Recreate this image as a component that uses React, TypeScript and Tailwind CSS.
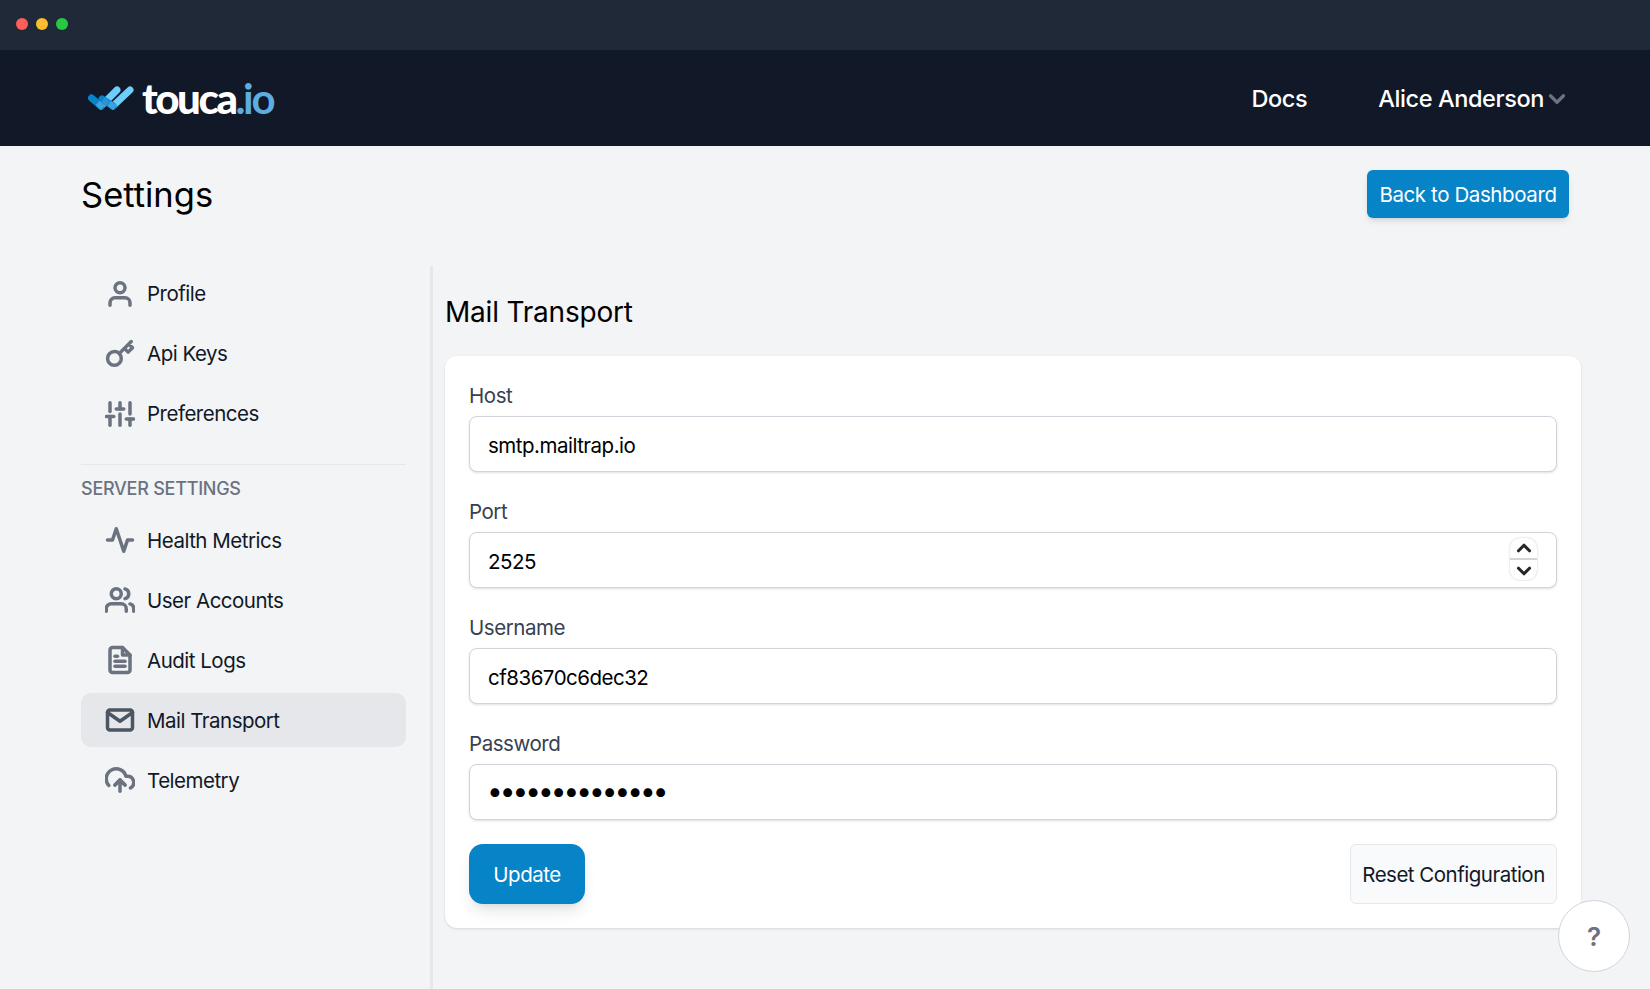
import React from 'react';
import { FiUser, FiKey, FiSliders, FiActivity, FiUsers, FiFileText, FiMail, FiUploadCloud, FiChevronDown, FiChevronUp } from 'react-icons/fi';

type NavItem = { label: string; icon: React.ComponentType<{ size?: number; strokeWidth?: number; className?: string }>; active?: boolean };

const personal: NavItem[] = [
  { label: 'Profile', icon: FiUser },
  { label: 'Api Keys', icon: FiKey },
  { label: 'Preferences', icon: FiSliders },
];

const server: NavItem[] = [
  { label: 'Health Metrics', icon: FiActivity },
  { label: 'User Accounts', icon: FiUsers },
  { label: 'Audit Logs', icon: FiFileText },
  { label: 'Mail Transport', icon: FiMail, active: true },
  { label: 'Telemetry', icon: FiUploadCloud },
];

function NavRow({ item, raised = false }: { item: NavItem; raised?: boolean }) {
  const Icon = item.icon;
  return (
    <a className={`flex h-[54px] items-center gap-[12px] rounded-[10px] px-[24px] text-[20.5px] tracking-[-0.5px] text-[#111827] ${item.active ? 'bg-[#e5e7eb]' : ''}`}>
      <Icon size={30} strokeWidth={2.8} className={item.active ? 'text-[#4b5563]' : 'text-[#6b7280]'} />
      <span className={raised ? 'pt-0' : 'pt-[2px]'}>{item.label}</span>
    </a>
  );
}

function Field({ label, value, type = 'text', spinner = false }: { label: string; value: string; type?: string; spinner?: boolean }) {
  const isPassword = type === 'password';
  return (
    <div className="flex flex-col">
      <label className="mb-[5px] h-[31px] text-[20.5px] leading-[31px] tracking-[-0.45px] text-[#374151]">{label}</label>
      <div className="relative">
        <input
          readOnly
          type={type}
          value={value}
          className={`h-[56px] w-full rounded-[8px] border border-[#d1d5db] bg-white pr-[18px] text-black shadow-sm outline-none ${
            isPassword ? 'pb-[3px] pl-[17px] text-[28px] tracking-[-3px]' : 'pl-[18px] pt-[2px] text-[20.5px] tracking-[-0.5px]'
          }`}
        />
        {spinner && (
          <div className="absolute right-[20px] top-[6px] flex h-[42px] w-[27px] flex-col items-center overflow-hidden rounded-[10px] bg-white text-[#27272a] shadow-[0_0_2px_rgba(0,0,0,0.25)]">
            <div className="flex h-[22px] w-full items-center justify-center border-b-[2px] border-[#d4d4d8]">
              <FiChevronUp size={22} strokeWidth={3.4} />
            </div>
            <div className="flex w-full flex-1 items-center justify-center">
              <FiChevronDown size={22} strokeWidth={3.4} />
            </div>
          </div>
        )}
      </div>
    </div>
  );
}

function LogoMark() {
  return (
    <svg width="48" height="28" viewBox="0 0 48 28" fill="none" strokeLinecap="round">
      <path d="M13 22 L29 6" stroke="#6fcdfc" strokeWidth="7" />
      <path d="M25 22 L42 6" stroke="#6fcdfc" strokeWidth="7" />
      <path d="M3.500 14 L13 22" stroke="#0784c7" strokeWidth="7" />
      <path d="M14 15 L25 22" stroke="#0784c7" strokeWidth="7" />
      <path d="M9.500 19 L15 23.500" stroke="#3ea3dc" strokeWidth="6" strokeLinecap="butt" />
      <path d="M15 16 L20 19.500" stroke="#2f93d3" strokeWidth="6" strokeLinecap="butt" />
      <path d="M21 19.500 L27 23.500" stroke="#3ea3dc" strokeWidth="6" strokeLinecap="butt" />
    </svg>
  );
}

export default function App() {
  return (
    <div className="flex h-[989px] flex-col overflow-hidden bg-[#f3f4f6] font-['Inter',sans-serif] text-black">
      <div className="flex h-[50px] items-center gap-[8px] bg-[#1f2937] pb-[2px] pl-[16px]">
        <span className="h-[12px] w-[12px] rounded-full bg-[#fe5f57]" />
        <span className="h-[12px] w-[12px] rounded-full bg-[#febc2e]" />
        <span className="h-[12px] w-[12px] rounded-full bg-[#28c840]" />
      </div>

      <header className="flex h-[96px] items-center justify-between bg-[#111827] pl-[88px] pr-[80px]">
        <div className="flex items-center gap-[6px]">
          <LogoMark />
          <span className="font-['Lato',sans-serif] text-[42px] font-black leading-none tracking-[-2.4px] text-white">
            touca<span className="font-bold text-[#5dade0]">.io</span>
          </span>
        </div>
        <nav className="flex items-center pt-[2px] text-[23.5px] font-medium tracking-[-0.4px] text-white">
          <a className="mr-[71px]">Docs</a>
          <a className="flex items-center">
            Alice Anderson
            <FiChevronDown size={26} strokeWidth={3} className="text-[#6b7280]" />
          </a>
        </nav>
      </header>

      <main className="flex min-h-0 flex-1 flex-col pl-[81px] pr-[69px] pt-[24px]">
        <div className="flex h-[48px] items-center justify-between pr-[12px]">
          <h1 className="pt-[2px] text-[34.5px] font-normal">Settings</h1>
          <button className="flex h-[48px] w-[202px] items-center justify-center rounded-[6px] bg-[#0784c7] pt-[2px] text-[20.5px] tracking-[-0.4px] text-white shadow-md">
            Back to Dashboard
          </button>
        </div>

        <div className="mt-[48px] flex min-h-0 flex-1">
          <aside className="w-[325px] pt-[1px]">
            <div className="flex flex-col gap-[6px]">
              {personal.map((i) => <NavRow key={i.label} item={i} raised />)}
            </div>
            <div className="mt-[23px] border-t border-[#e5e7eb]" />
            <h2 className="flex h-[48px] items-center pb-[2px] text-[18px] font-medium tracking-[-0.25px] text-[#6b7280]">SERVER SETTINGS</h2>
            <div className="flex flex-col gap-[6px]">
              {server.map((i) => <NavRow key={i.label} item={i} />)}
            </div>
          </aside>

          <section className="ml-[24px] flex-1 border-l-[3px] border-[#e5e7eb] pl-[12px]">
            <h2 className="flex h-[90px] items-center pt-[2px] text-[28px] font-normal tracking-[-0.2px]">Mail Transport</h2>
            <div className="flex flex-col gap-[24px] rounded-[12px] bg-white p-[24px] shadow-sm">
              <Field label="Host" value="smtp.mailtrap.io" />
              <Field label="Port" value="2525" spinner />
              <Field label="Username" value="cf83670c6dec32" />
              <Field label="Password" value="••••••••••••••" type="password" />
              <div className="flex items-center justify-between">
                <button className="flex h-[60px] w-[116px] items-center justify-center rounded-[14px] bg-[#0784c7] pt-[2px] text-[20.5px] tracking-[-0.5px] text-white shadow-lg">
                  Update
                </button>
                <button className="flex h-[60px] w-[207px] items-center justify-center rounded-[6px] border border-[#e5e7eb] bg-[#f9fafb] pt-[2px] text-[20.5px] tracking-[-0.5px] text-[#111827]">
                  Reset Configuration
                </button>
              </div>
            </div>
          </section>
        </div>
      </main>

      <button className="absolute left-[1558px] top-[900px] flex h-[72px] w-[72px] items-center justify-center rounded-full border border-[#d1d5db] bg-white text-[26px] font-semibold text-[#6b7280]">
        ?
      </button>
    </div>
  );
}
